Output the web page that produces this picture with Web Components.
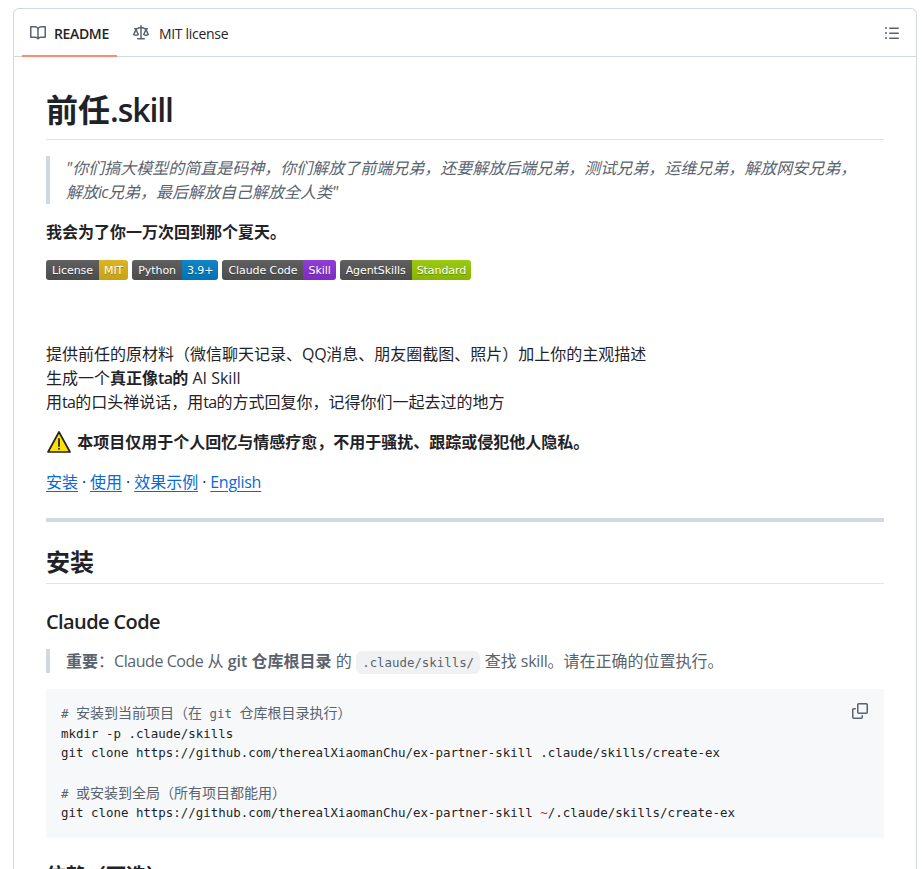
<!DOCTYPE html>
<html lang="zh"><head><meta charset="utf-8">
<style>
html,body{margin:0;height:869px;overflow:hidden;background:#fff}
body{padding:8px 5px 0 13px;box-sizing:border-box;font:16px/24px "Open Sans","Noto Sans CJK SC",sans-serif;color:#1f2328}
.t1{letter-spacing:-.45px}
.t2{letter-spacing:-.3px}
.t3{letter-spacing:-1.1px}
.t4{letter-spacing:-.6px}
.t5{letter-spacing:-.7px}
.t6{letter-spacing:-.15px}
</style></head><body>
<readme-card>
  <tab-item slot="tabs" active icon="book" style="letter-spacing:-.35px">README</tab-item>
  <tab-item slot="tabs" icon="law" style="margin-left:8px;--icon-gap:10px;letter-spacing:-.3px">MIT license</tab-item>
  <md-h level="1"><span>前任</span><span class="t3">.skill</span></md-h>
  <md-quote style="font-style:italic">"你们搞大模型的简直是码神，你们解放了前端兄弟，还要解放后端兄弟，测试兄弟，运维兄弟，解放网安兄弟，<br>解放<span class="t5">ic</span>兄弟，最后解放自己解放全人类<span class="t5">"</span></md-quote>
  <md-p><b>我会为了你一万次回到那个夏天。</b></md-p>
  <badge-row>
    <shield-badge label="License" value="MIT" color="#dfb317"></shield-badge>
    <shield-badge label="Python" value="3.9+" color="#007ec6"></shield-badge>
    <shield-badge label="Claude Code" value="Skill" color="#8b2fd6"></shield-badge>
    <shield-badge label="AgentSkills" value="Standard" color="#97ca00"></shield-badge>
  </badge-row>
  <md-p style="padding-top:42px">提供前任的原材料（微信聊天记录、<span class="t2">QQ</span>消息、朋友圈截图、照片）加上你的主观描述<br>生成一个<b>真正像<span class="t5">ta</span>的</b> AI Skill<br>用<span class="t5">ta</span>的口头禅说话，用<span class="t5">ta</span>的方式回复你，记得你们一起去过的地方</md-p>
  <md-p><warn-icon></warn-icon> <b>本项目仅用于个人回忆与情感疗愈，不用于骚扰、跟踪或侵犯他人隐私。</b></md-p>
  <md-p><md-a>安装</md-a><span class="t6"> · </span><md-a>使用</md-a><span class="t6"> · </span><md-a>效果示例</md-a><span class="t6"> · </span><md-a class="t2">English</md-a></md-p>
  <md-hr></md-hr>
  <md-h level="2">安装</md-h>
  <md-h level="3"><span class="t4">Claude Code</span></md-h>
  <md-quote><b>重要</b>：<span class="t1">Claude Code</span> 从 <b>git 仓库根目录</b> 的 <md-code>.claude/skills/</md-code> 查找 <span class="t2">skill</span>。请在正确的位置执行。</md-quote>
  <code-block></code-block>
  <md-h level="3">依赖（可选）</md-h>
</readme-card>
<script>
const def=(n,c)=>customElements.define(n,c);
const shell=(el,html)=>{el.attachShadow({mode:'open'}).innerHTML=html;};
const ICONS={
 book:'<path d="M0 1.75A.75.75 0 0 1 .75 1h4.253c1.227 0 2.317.59 3 1.501A3.743 3.743 0 0 1 11.006 1h4.245a.75.75 0 0 1 .75.75v10.5a.75.75 0 0 1-.75.75h-4.507a2.25 2.25 0 0 0-1.591.659l-.622.621a.75.75 0 0 1-1.06 0l-.622-.621A2.25 2.25 0 0 0 5.258 13H.75a.75.75 0 0 1-.75-.75Zm7.251 10.324.004-5.073-.002-2.253A2.25 2.25 0 0 0 5.003 2.5H1.5v9h3.757a3.75 3.75 0 0 1 1.994.574ZM8.755 4.75l-.004 7.322a3.752 3.752 0 0 1 1.992-.572H14.5v-9h-3.495a2.25 2.25 0 0 0-2.25 2.25Z"/>',
 law:'<path d="M8.75.75V2h.985c.304 0 .603.08.867.231l1.29.736c.038.022.08.033.124.033h2.234a.75.75 0 0 1 0 1.5h-.427l2.111 4.692a.75.75 0 0 1-.154.838l-.53-.53.529.531-.001.002-.002.002-.006.006-.006.005-.01.01-.045.04c-.21.176-.441.327-.686.45C14.556 10.78 13.88 11 13 11a4.498 4.498 0 0 1-2.023-.454 3.544 3.544 0 0 1-.686-.45l-.045-.04-.016-.015-.006-.006-.004-.004v-.001a.75.75 0 0 1-.154-.838L12.178 4.5h-.162c-.305 0-.604-.079-.868-.231l-1.29-.736a.245.245 0 0 0-.124-.033H8.75V13h2.5a.75.75 0 0 1 0 1.5h-6.5a.75.75 0 0 1 0-1.5h2.5V3.5h-.984a.245.245 0 0 0-.124.033l-1.289.737c-.265.15-.564.23-.869.23h-.162l2.112 4.692a.75.75 0 0 1-.154.838l-.53-.53.529.531-.001.002-.002.002-.006.006-.016.015-.045.04c-.21.176-.441.327-.686.45C4.556 10.78 3.88 11 3 11a4.498 4.498 0 0 1-2.023-.454 3.544 3.544 0 0 1-.686-.45l-.045-.04-.016-.015-.006-.006-.004-.004v-.001a.75.75 0 0 1-.154-.838L2.178 4.5H1.75a.75.75 0 0 1 0-1.5h2.234a.249.249 0 0 0 .125-.033l1.288-.737c.265-.15.564-.23.869-.23h.984V.75a.75.75 0 0 1 1.5 0Zm2.945 8.477c.285.135.718.273 1.305.273s1.02-.138 1.305-.273L13 6.327Zm-10 0c.285.135.718.273 1.305.273s1.02-.138 1.305-.273L3 6.327Z"/>',
 list:'<path d="M5.75 2.5h8.5a.75.75 0 0 1 0 1.5h-8.5a.75.75 0 0 1 0-1.5Zm0 5h8.5a.75.75 0 0 1 0 1.5h-8.5a.75.75 0 0 1 0-1.5Zm0 5h8.5a.75.75 0 0 1 0 1.5h-8.5a.75.75 0 0 1 0-1.5ZM2 14a1 1 0 1 1 0-2 1 1 0 0 1 0 2Zm1-6a1 1 0 1 1-2 0 1 1 0 0 1 2 0ZM2 4a1 1 0 1 1 0-2 1 1 0 0 1 0 2Z"/>',
 copy:'<path d="M0 6.75C0 5.784.784 5 1.75 5h1.5a.75.75 0 0 1 0 1.5h-1.5a.25.25 0 0 0-.25.25v7.5c0 .138.112.25.25.25h7.5a.25.25 0 0 0 .25-.25v-1.5a.75.75 0 0 1 1.5 0v1.5A1.75 1.75 0 0 1 9.25 16h-7.5A1.75 1.75 0 0 1 0 14.25Z"/><path d="M5 1.75C5 .784 5.784 0 6.75 0h7.5C15.216 0 16 .784 16 1.75v7.5A1.75 1.75 0 0 1 14.25 11h-7.5A1.75 1.75 0 0 1 5 9.25Zm1.75-.25a.25.25 0 0 0-.25.25v7.5c0 .138.112.25.25.25h7.5a.25.25 0 0 0 .25-.25v-7.5a.25.25 0 0 0-.25-.25Z"/>'
};
const svg=n=>`<svg viewBox="0 0 16 16" width="16" height="16" fill="#59636e" aria-hidden="true">${ICONS[n]}</svg>`;

def('readme-card',class extends HTMLElement{connectedCallback(){shell(this,`<style>
:host{display:block;border:1px solid #d1d9e0;border-bottom:0;border-radius:6px 6px 0 0;background:#fff;height:900px;box-sizing:border-box}
nav{display:flex;align-items:center;height:47px;border-bottom:1px solid #d1d9e0;padding:0 8px}
.end{margin-left:auto;display:flex;padding-right:8px}
.end svg{display:block}
article{padding:32px 32px 0}
</style><nav><slot name="tabs"></slot><span class="end">${svg('list')}</span></nav><article><slot></slot></article>`)}});

def('tab-item',class extends HTMLElement{connectedCallback(){const a=this.hasAttribute('active');shell(this,`<style>
:host{display:flex;align-items:center;gap:var(--icon-gap,8px);height:47px;padding:0 8px;font:${a?600:400} 14px/20px "Open Sans",sans-serif;color:#1f2328;position:relative;box-sizing:border-box}
:host([active])::after{content:"";position:absolute;left:0;right:0;bottom:-1px;height:2px;background:#fd8c73}
svg{display:block}
.txt{padding-top:2px}
</style>${svg(this.getAttribute('icon'))}<span class="txt"><slot></slot></span>`)}});

def('md-h',class extends HTMLElement{connectedCallback(){const l=this.getAttribute('level');const s={1:'font-size:32px;line-height:40px;padding:1px 0 8.6px;border-bottom:1px solid #d1d9e0b3;margin-bottom:16px',2:'font-size:24px;line-height:30px;padding:1px 0 6.2px;border-bottom:1px solid #d1d9e0b3;margin:24px 0 16px',3:'font-size:20px;line-height:23px;padding-top:2px;margin:24px 0 16px'}[l];shell(this,`<style>:host{display:block;font-weight:600;${s}}</style><slot></slot>`)}});

def('md-p',class extends HTMLElement{connectedCallback(){shell(this,`<style>:host{display:block;margin-bottom:16px}::slotted(b){font-weight:600}</style><slot></slot>`)}});

def('md-quote',class extends HTMLElement{connectedCallback(){shell(this,`<style>:host{display:block;border-left:4px solid #d1d9e0;padding-left:16px;color:#59636e;margin-bottom:16px}::slotted(b){font-weight:600}</style><slot></slot>`)}});

def('badge-row',class extends HTMLElement{connectedCallback(){shell(this,`<style>:host{display:flex;gap:4px;margin-bottom:16px;height:24px}</style><slot></slot>`)}});

def('shield-badge',class extends HTMLElement{connectedCallback(){shell(this,`<style>
:host{display:inline-flex;height:20px;border-radius:3px;overflow:hidden;font:11px/19px "DejaVu Sans",sans-serif;letter-spacing:-.07px;color:#fff;text-shadow:0 1px 0 rgba(1,1,1,.3)}
span{padding:1px 6px 0;background-image:linear-gradient(#bbbbbb1a,#0000001a)}
.l{background-color:#555}
.v{background-color:${this.getAttribute('color')};padding:1px 5px 0}
</style><span class="l">${this.getAttribute('label')}</span><span class="v">${this.getAttribute('value')}</span>`)}});

def('warn-icon',class extends HTMLElement{connectedCallback(){shell(this,`<style>:host{display:inline-block;vertical-align:-6px;width:24px;height:24px;margin:0 2px 0 1px}svg{display:block}</style>
<svg viewBox="0 0 24 24" width="24" height="24"><path d="M12 2 1 22h22Z" fill="#ffe000" stroke="#222" stroke-width="1.7" stroke-linejoin="round"/><path d="M12 9v7" stroke="#3a3a3a" stroke-width="2" stroke-linecap="round"/><circle cx="12" cy="18.8" r="1.1" fill="#3a3a3a"/></svg>`)}});

def('md-a',class extends HTMLElement{connectedCallback(){shell(this,`<style>:host{color:#0969da;text-decoration:underline;text-underline-offset:.2rem}</style><slot></slot>`)}});

def('md-hr',class extends HTMLElement{connectedCallback(){shell(this,`<style>:host{display:block;height:4px;background:#d1d9e0;margin:24px 0}</style>`)}});

def('md-code',class extends HTMLElement{connectedCallback(){shell(this,`<style>:host{display:inline;background:#818b981f;border-radius:6px;padding:4px 6.4px;font:12.4px/1 "DejaVu Sans Mono",monospace;color:#59636e}</style><slot></slot>`)}});

def('code-block',class extends HTMLElement{connectedCallback(){
 const cj=s=>s.replace(/[\u3000-\uffff]+/g,m=>`<i>${m}</i>`);
 const c=s=>`<span class="c">${cj(s)}</span>`;
 shell(this,`<style>
:host{display:block;position:relative;background:#f6f8fa;padding:14px 16px 18px 15px;height:117px;margin-bottom:16px;font:12.45px/19.72px "DejaVu Sans Mono","Noto Sans CJK SC",monospace;color:#1f2328;white-space:pre}
i{font:14px/19px "Noto Sans CJK SC",sans-serif}
.c{color:#59636e}
button{position:absolute;top:14px;right:16px;border:0;background:none;padding:0;line-height:0}
.op{color:#cf222e}
</style>${c('# 安装到当前项目（在 git 仓库根目录执行）')}
mkdir -p .claude/skills
git clone https://github.com/therealXiaomanChu/ex-partner-skill .claude/skills/create-ex

${c('# 或安装到全局（所有项目都能用）')}
git clone https://github.com/therealXiaomanChu/ex-partner-skill <span class="op">~</span>/.claude/skills/create-ex<button aria-label="copy">${svg('copy')}</button>`)}});
</script>
</body></html>
